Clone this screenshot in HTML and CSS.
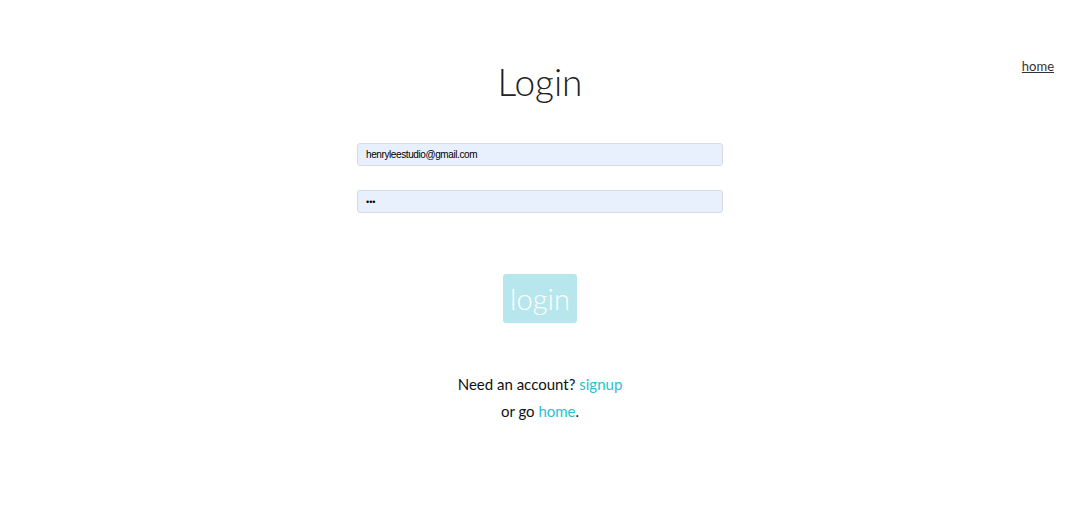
FILE: index.html
```html
<!DOCTYPE html>
<html lang="en">
<head>
<meta charset="utf-8">
<title>Login</title>
<link rel="stylesheet" href="styles.css">
</head>
<body>
<div class="page">
  <div class="spacer"></div>
  <h1 class="title">Login</h1>
  <nav class="nav"><a href="#" class="nav-link">home</a></nav>
</div>
<form class="form">
  <input class="field" type="email" value="henryleestudio@gmail.com">
  <input class="field field-pass" type="password" value="abc">
  <button class="btn" type="button">login</button>
  <p class="note">Need an account? <a href="#" class="link">signup</a><br>or go <a href="#" class="link">home</a>.</p>
</form>
</body>
</html>
```
FILE: styles.css
```css
html, body {
  margin: 0;
  background: #fff;
}
body {
  font-family: Lato, "Open Sans", sans-serif;
  color: #111;
}
.page {
  display: grid;
  grid-template-columns: 1fr auto 1fr;
  padding: 58px 26px 0;
  align-items: start;
}
.title {
  margin: 0;
  font-size: 37px;
  line-height: 48px;
  font-weight: 300;
  color: #222;
}
.nav {
  justify-self: end;
  margin-top: -3px;
}
.nav-link {
  font-size: 13px;
  line-height: 17px;
  color: #333;
  text-decoration: underline;
}
.form {
  display: flex;
  flex-direction: column;
  align-items: center;
  margin-top: 37px;
}
.field {
  box-sizing: border-box;
  width: 366px;
  height: 23px;
  margin: 0;
  padding: 0 8px;
  border: 1px solid #d6dbe6;
  border-radius: 3px;
  background: #e8f0fe;
  font-family: "Liberation Sans", Arial, sans-serif;
  font-size: 10px;
  letter-spacing: -0.4px;
  color: #000;
  outline: none;
}
.field-pass {
  margin-top: 24px;
  font-size: 9px;
  letter-spacing: 0;
}
.btn {
  margin-top: 61px;
  width: 74px;
  height: 49px;
  padding: 0;
  border: none;
  border-radius: 3px;
  background: #b7e7ec;
  color: #fff;
  font-family: Lato, sans-serif;
  font-weight: 300;
  font-size: 29px;
  line-height: 49px;
}
.note {
  margin: 48px 0 0;
  text-align: center;
  font-size: 15px;
  line-height: 27px;
  color: #111;
}
.link {
  color: #2bbfcf;
  text-decoration: none;
}
```
